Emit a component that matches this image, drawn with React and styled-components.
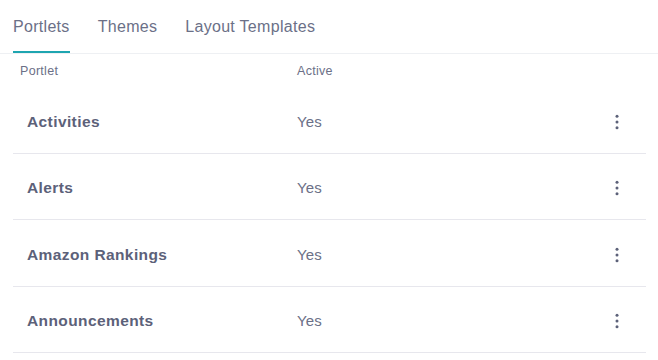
import React from "react";
import styled, { createGlobalStyle } from "styled-components";

const Global = createGlobalStyle`
  html, body { margin: 0; padding: 0; background: #ffffff; }
  body { font-family: "Liberation Sans", Arial, sans-serif; -webkit-font-smoothing: antialiased; }
`;

const Nav = styled.nav`
  display: flex;
  gap: 28px;
  padding-left: 13px;
  border-bottom: 1px solid #eef0f3;
  height: 54px;
  box-sizing: border-box;
`;

const Tab = styled.div`
  font-size: 16px;
  letter-spacing: 0.3px;
  line-height: 20px;
  color: #6b7087;
  padding-top: 17px;
  height: 53px;
  box-sizing: border-box;
  border-bottom: 2px solid ${(p) => (p.$active ? "#1ea5b0" : "transparent")};
  margin-bottom: -1px;
  white-space: nowrap;
`;

const Table = styled.div`
  margin: 0 12px 0 13px;
`;

const Grid = styled.div`
  display: grid;
  grid-template-columns: 284px 1fr 58px;
  align-items: center;
`;

const HeadRow = styled(Grid)`
  height: 33px;
  font-size: 12.5px;
  letter-spacing: 0.3px;
  line-height: 16px;
  color: #6b7087;
  padding-top: 1px;
  box-sizing: border-box;
`;

const HeadCell = styled.div`
  padding-left: ${(p) => p.$pad || 0}px;
  align-self: start;
  padding-top: 8px;
`;

const Row = styled(Grid)`
  height: 66.5px;
  box-sizing: border-box;
  border-bottom: 1px solid #e7e7ed;
  padding-top: 4px;
`;

const Name = styled.div`
  padding-left: 14px;
  font-size: 15.5px;
  letter-spacing: 0.4px;
  font-weight: 700;
  line-height: 20px;
  color: #5c6179;
`;

const Value = styled.div`
  font-size: 15px;
  letter-spacing: 0.1px;
  line-height: 20px;
  color: #6b7087;
`;

const Kebab = styled.div`
  display: flex;
  justify-content: center;
  align-items: center;
  color: #5c6179;
`;

const Dots = () => (
  <svg width="4" height="16" viewBox="0 0 4 16" fill="currentColor">
    <circle cx="2" cy="2.3" r="1.5" />
    <circle cx="2" cy="8" r="1.5" />
    <circle cx="2" cy="13.7" r="1.5" />
  </svg>
);

const rows = ["Activities", "Alerts", "Amazon Rankings", "Announcements"];

export default function App() {
  return (
    <>
      <Global />
      <Nav>
        <Tab $active>Portlets</Tab>
        <Tab>Themes</Tab>
        <Tab>Layout Templates</Tab>
      </Nav>
      <Table>
        <HeadRow>
          <HeadCell $pad={7}>Portlet</HeadCell>
          <HeadCell>Active</HeadCell>
          <div />
        </HeadRow>
        {rows.map((r) => (
          <Row key={r}>
            <Name>{r}</Name>
            <Value>Yes</Value>
            <Kebab>
              <Dots />
            </Kebab>
          </Row>
        ))}
      </Table>
    </>
  );
}
